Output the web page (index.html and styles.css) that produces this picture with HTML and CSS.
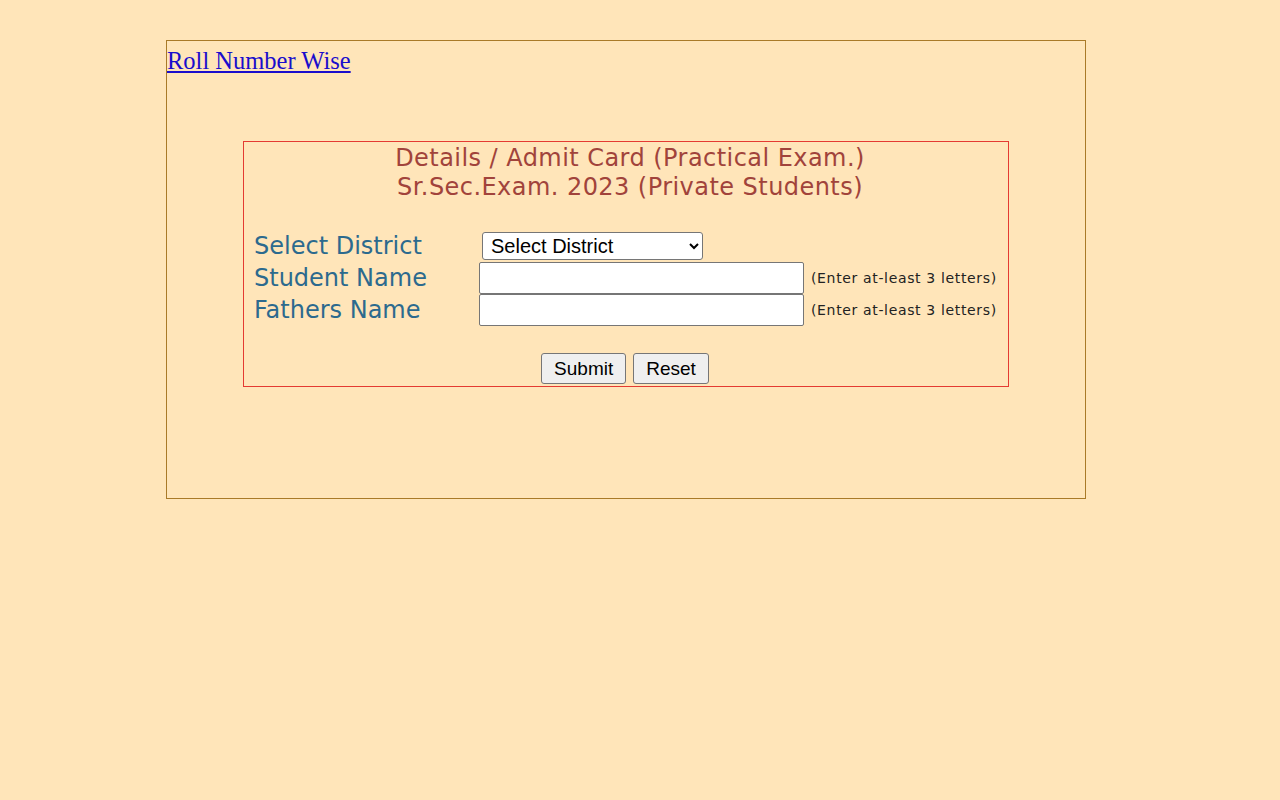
FILE: index.html
```html
<!DOCTYPE html>
<html>
<head>
<meta charset="utf-8">
<link rel="stylesheet" href="styles.css">
</head>
<body>
<div class="outer">
  <a class="rollLink" href="#">Roll Number Wise</a>
  <form class="panel">
    <div class="title">Details / Admit Card (Practical Exam.)<br>Sr.Sec.Exam. 2023 (Private Students)</div>
    <div class="rows">
      <label class="lbl">Select District</label>
      <div class="ctl"><select class="sel"><option>Select District</option></select></div>
      <span class="note"></span>
      <label class="lbl">Student Name</label>
      <div class="ctl"><input class="txt" type="text"></div>
      <span class="note">(Enter at-least 3 letters)</span>
      <label class="lbl">Fathers Name</label>
      <div class="ctl"><input class="txt" type="text"></div>
      <span class="note">(Enter at-least 3 letters)</span>
    </div>
    <div class="actions">
      <button type="button" class="btn">Submit</button>
      <button type="reset" class="btn">Reset</button>
    </div>
  </form>
</div>
</body>
</html>
```
FILE: styles.css
```css
html, body {
  margin: 0;
  padding: 0;
  background: #ffe5b9;
}
body {
  padding: 40px 0 0 166px;
}
.outer {
  width: 918px;
  height: 457px;
  border: 1px solid #a97a28;
  box-sizing: content-box;
}
.rollLink {
  display: block;
  width: max-content;
  margin-top: 6px;
  font-family: "Liberation Serif", serif;
  font-size: 24.5px;
  line-height: 28px;
  color: #1a0dcc;
  text-decoration: underline;
}
.panel {
  display: block;
  width: 764px;
  margin: 66px auto 0;
  border: 1px solid #e43a32;
  padding: 2px 0 2px;
}
.title {
  text-align: center;
  padding-left: 8px;
  font-family: "DejaVu Sans", Verdana, sans-serif;
  font-size: 24px;
  letter-spacing: 0.45px;
  line-height: 29px;
  color: #a1433b;
}
.rows {
  display: grid;
  grid-template-columns: 225px 332px auto;
  grid-auto-rows: 32px;
  align-items: center;
  margin: 28px 0 0 10px;
}
.lbl {
  font-family: "DejaVu Sans", Verdana, sans-serif;
  font-size: 24px;
  color: #2c6a8e;
}
.ctl {
  display: flex;
  align-items: center;
}
.sel {
  margin-left: 3px;
  width: 221px;
  height: 28px;
  padding-left: 4px;
  font-family: "Liberation Sans", Arial, sans-serif;
  font-size: 20px;
  color: #000;
  background: #fff;
  border: 1px solid #767676;
  border-radius: 3px;
}
.txt {
  width: 325px;
  height: 32px;
  box-sizing: border-box;
  background: #fff;
  border: 1px solid #767676;
  border-radius: 2px;
  font-size: 18px;
}
.note {
  font-family: "DejaVu Sans", Verdana, sans-serif;
  font-size: 14px;
  letter-spacing: 0.65px;
  color: #222;
}
.actions {
  display: flex;
  justify-content: center;
  gap: 7px;
  margin: 27px 0 0;
  padding-right: 2px;
}
.btn {
  height: 31px;
  padding: 0 12px;
  font-family: "Liberation Sans", Arial, sans-serif;
  font-size: 19px;
  color: #000;
  background: #efefef;
  border: 1px solid #767676;
  border-radius: 3px;
}
```
